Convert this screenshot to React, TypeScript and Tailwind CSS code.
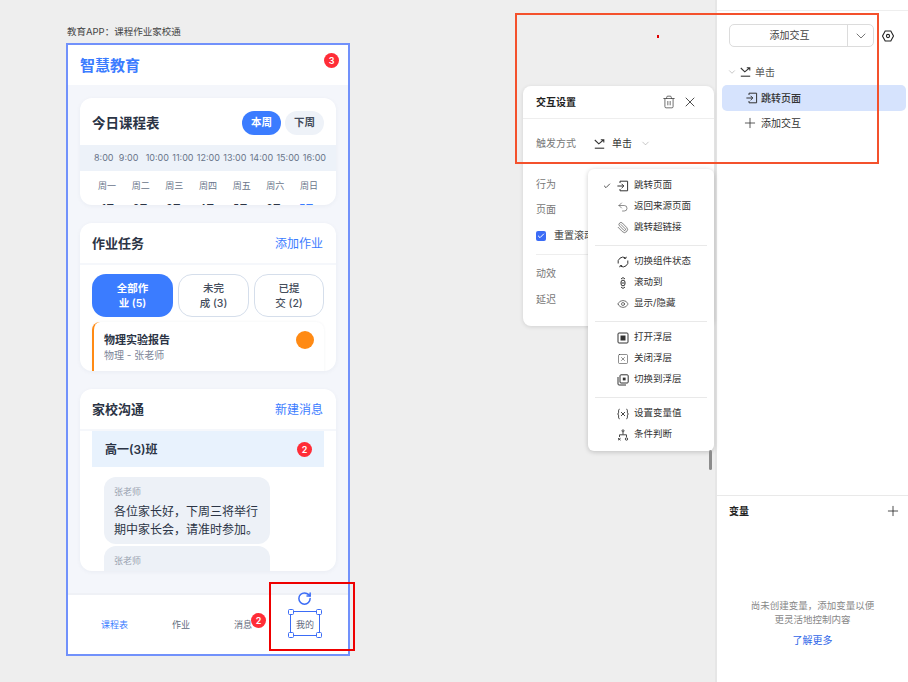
import { Check, ChevronDown, Eye, Paperclip, Plus, RotateCw, SquareX, Trash2, Undo2, X } from "lucide-react";
import type { ReactNode } from "react";

const font = "font-['Inter','Noto_Sans_CJK_SC',sans-serif]";

function TriggerIcon() {
  return (
    <svg width="11" height="10" viewBox="0 0 11 10" fill="none" stroke="#333" strokeWidth="1.1">
      <path d="M.8 9.2h9.4" />
      <path d="M.8 1l4 3.8 4.6-3.8M6.8.8h3v2.8" />
    </svg>
  );
}

function JumpIcon() {
  return (
    <svg width="12" height="12" viewBox="0 0 12 12" fill="none" stroke="#333" strokeWidth="1">
      <path d="M3 3V1.2h7.6v9.6H3V9" />
      <path d="M.4 6h6.4M4.6 3.8 6.8 6 4.6 8.2" />
    </svg>
  );
}

function SwitchIcon() {
  return (
    <svg width="12" height="12" viewBox="0 0 12 12" fill="none" stroke="#333" strokeWidth="1">
      <path d="M1.2 7.5A5 5 0 0 1 8.500 1.800M10.800 4.500a5 5 0 0 1-7.300 5.700" />
      <path d="M9.300.8 8.700 2.500 6.900 2.300M2.700 11.200l.6-1.700 1.800.2" />
    </svg>
  );
}

function ScrollIcon() {
  return (
    <svg width="12" height="12" viewBox="0 0 12 12" fill="none" stroke="#333" strokeWidth="1">
      <rect x="4" y="3.200" width="4" height="5.600" rx="2" />
      <path d="M4 2 6 .6 8 2M4 10l2 1.400L8 10M4.400 6h3.200" />
    </svg>
  );
}

function OpenLayerIcon() {
  return (
    <svg width="12" height="12" viewBox="0 0 12 12" fill="none" stroke="#333">
      <rect x="1" y="1" width="10" height="10" rx="1" />
      <rect x="3.500" y="3.500" width="5" height="5" fill="#333" stroke="none" />
    </svg>
  );
}

function SwapLayerIcon() {
  return (
    <svg width="12" height="12" viewBox="0 0 12 12" fill="none" stroke="#333">
      <rect x="3" y=".8" width="8.200" height="8.200" rx="1" />
      <rect x="5.800" y="3.600" width="2.800" height="2.800" fill="#333" stroke="none" />
      <path d="M1 3v7a1 1 0 0 0 1 1h7" />
    </svg>
  );
}

function VariableIcon() {
  return (
    <svg width="12" height="12" viewBox="0 0 12 12" fill="none" stroke="#333" strokeWidth=".9">
      <path d="M2.600 1.200C1.400 1.200 1.600 2.400 1.600 4c0 1.300-.3 2-1 2 .7 0 1 .7 1 2 0 1.600-.2 2.800 1 2.800" />
      <path d="M9.400 1.200c1.200 0 1 1.200 1 2.800 0 1.300.3 2 1 2-.7 0-1 .7-1 2 0 1.600.2 2.800-1 2.800" />
      <path d="M4 4l4 4M8 4 4 8" />
    </svg>
  );
}

function BranchIcon() {
  return (
    <svg width="12" height="12" viewBox="0 0 12 12" fill="none" stroke="#333" strokeWidth=".9">
      <circle cx="6" cy="1.800" r="1" />
      <path d="M6 3v2.500M2.500 8V5.800h7V8" />
      <path d="M1 9.200l2.600 2M3.600 9.200 1 11.200" />
      <circle cx="9.500" cy="10" r="1.200" />
    </svg>
  );
}

function HexIcon() {
  return (
    <svg width="12" height="12" viewBox="0 0 12 12" fill="none" stroke="#222" strokeWidth="1.1">
      <path d="M3.200 1h5.600L11.500 6 8.800 11H3.200L.5 6z" />
      <circle cx="6" cy="6" r="1.600" />
    </svg>
  );
}

function Badge({ n, className }: { n: number; className: string }) {
  return (
    <span className={`absolute flex h-[15px] w-[15px] items-center justify-center rounded-full bg-[#ff2d37] text-[9px] font-semibold text-white ${className}`}>
      {n}
    </span>
  );
}

function Card({ className, children }: { className: string; children: ReactNode }) {
  return <section className={`overflow-hidden rounded-xl bg-white shadow-[0_1px_4px_rgba(30,50,90,0.05)] ${className}`}>{children}</section>;
}

function CardHead({ title, action }: { title: string; action: string }) {
  return (
    <div className="flex h-[42px] items-center justify-between border-b-2 border-[#f5f7fb] pt-[2px] pr-[13px] pl-3">
      <h2 className="text-[13px] font-semibold text-[#2b3445]">{title}</h2>
      <span className="text-xs text-[#3b7cff]">{action}</span>
    </div>
  );
}

function Phone() {
  const days = ["周一", "周二", "周三", "周四", "周五", "周六", "周日"];
  return (
    <div className="absolute top-[43px] left-[66px] flex h-[613px] w-[284px] flex-col border-2 border-[#7191fb] bg-[#f4f6fb]">
      <header className="relative flex h-[40px] shrink-0 items-center bg-white px-[12px] pt-[2px]">
        <h1 className="text-[15px] font-bold text-[#3b7cff]">智慧教育</h1>
        <Badge n={3} className="top-[8px] right-[9px]" />
      </header>
      <div className="flex flex-1 flex-col gap-[18px] px-[12px] pt-[13px]">
        <Card className="h-[107px]">
          <div className="flex h-[47px] items-center justify-between px-3 pt-[2px]">
            <h2 className="pt-[2px] text-[13.5px] font-semibold text-[#2b3445]">今日课程表</h2>
            <div className="flex gap-[4px] text-[10.5px] font-semibold">
              <span className="flex h-[24px] w-[39px] items-center justify-center rounded-full bg-[#3b7cff] text-white">本周</span>
              <span className="flex h-[24px] w-[39px] items-center justify-center rounded-full bg-[#eef2f8] text-[#444d5c]">下周</span>
            </div>
          </div>
          <div className="flex h-[26px] items-center gap-[3.3px] bg-[#edf2f9] pl-[14px] text-[9px] text-[#69758a]">
            <span className="mr-[2px]">8:00</span>
            <span className="mr-[4px]">9:00</span>
            <span>10:00</span>
            <span>11:00</span>
            <span>12:00</span>
            <span>13:00</span>
            <span>14:00</span>
            <span>15:00</span>
            <span>16:00</span>
          </div>
          <div className="flex justify-between px-[18px] pt-[8px] text-[9px] text-[#69758a]">
            {days.map((d) => (
              <span key={d}>{d}</span>
            ))}
          </div>
          <div className="flex justify-between px-[22px] pt-[8px] text-[9px] font-semibold text-[#2b3445]">
            {["1", "2", "3", "4", "5", "6"].map((d) => (
              <span key={d}>{d}日</span>
            ))}
            <span className="text-[#3b7cff]">7日</span>
          </div>
        </Card>
        <Card className="h-[148px]">
          <CardHead title="作业任务" action="添加作业" />
          <div className="flex gap-[5px] px-3 pt-[9px] text-[10.5px] leading-[15px] font-medium text-[#444d5c]">
            <span className="flex h-[43px] w-[81px] items-center justify-center rounded-[14px] bg-[#3b7cff] px-5 text-center font-semibold text-white">全部作业 (5)</span>
            <span className="flex h-[43px] w-[71px] items-center justify-center rounded-[14px] border border-[#d5deeb] px-[19px] text-center">未完成 (3)</span>
            <span className="flex h-[43px] w-[70px] items-center justify-center rounded-[14px] border border-[#d5deeb] px-[19px] text-center">已提交 (2)</span>
          </div>
          <div className="mx-3 mt-[5px] flex h-[60px] items-start justify-between rounded-lg border-l-2 border-[#ff8a14] pt-[9px] pr-[10px] pl-[10px] shadow-[0_0_3px_rgba(30,50,90,0.06)]">
            <div className="pt-[2px]">
              <p className="text-[11px] leading-[15px] font-semibold text-[#2b3445]">物理实验报告</p>
              <p className="text-[10px] leading-[15px] text-[#7b8698]">物理 - 张老师</p>
            </div>
            <span className="h-[18px] w-[18px] rounded-full bg-[#ff8a14]" />
          </div>
        </Card>
        <Card className="h-[182px]">
          <CardHead title="家校沟通" action="新建消息" />
          <div className="mx-3 h-[200px] bg-white">
            <div className="relative flex h-[36px] items-center bg-[#e8f2fd] px-[13px] pt-[2px] text-xs font-semibold text-[#2b3445]">
              高一(3)班
              <Badge n={2} className="top-[11px] right-[12px]" />
            </div>
            <div className="ml-3 flex w-[166px] flex-col gap-[2px] pt-[10px]">
              <div className="h-[67px] rounded-xl bg-[#edf1f7] px-[10px] pt-[8px]">
                <p className="text-[9px] leading-[13px] text-[#9aa3b1]">张老师</p>
                <p className="mt-[5px] text-xs leading-[18px] text-[#2b3445]">各位家长好，下周三将举行期中家长会，请准时参加。</p>
              </div>
              <div className="h-[60px] rounded-xl bg-[#edf1f7] px-[10px] pt-[8px]">
                <p className="text-[9px] leading-[13px] text-[#9aa3b1]">张老师</p>
              </div>
            </div>
          </div>
        </Card>
      </div>
      <nav className="relative flex h-[61px] shrink-0 items-center border-t-2 border-[#eff1f6] bg-white text-[9px] text-[#5f6a7c]">
        <span className="w-[96px] pl-[33px] text-[#3b7cff]">课程表</span>
        <span className="w-[60px] pl-[8px]">作业</span>
        <span className="relative w-[60px] pl-[10px]">
          消息
          <Badge n={2} className="-top-[5px] left-[27px]" />
        </span>
        <span className="pl-[12px]">我的</span>
        <div className="absolute top-[16px] left-[222px] h-[25px] w-[30px] border border-[#3b6cf6]">
          {["-top-[3px] -left-[3px]", "-top-[3px] -right-[3px]", "-bottom-[3px] -left-[3px]", "-bottom-[3px] -right-[3px]"].map((p) => (
            <i key={p} className={`absolute h-[6px] w-[6px] rounded-[1.5px] border border-[#3b6cf6] bg-white ${p}`} />
          ))}
        </div>
        <RotateCw className="absolute -top-[4px] left-[229px] text-[#3b6cf6]" size={15} strokeWidth={2.4} />
      </nav>
    </div>
  );
}

function SettingsPanel() {
  return (
    <div className="absolute top-[86px] left-[523px] h-[240px] w-[191px] rounded-lg bg-white text-[10px] text-[#777] shadow-[0_1px_4px_rgba(0,0,0,0.12)]">
      <div className="flex h-[33px] items-center justify-between border-b border-[#eeeeee] pr-[16px] pl-[13px]">
        <h3 className="font-semibold text-[#222]">交互设置</h3>
        <div className="flex items-center gap-[6px] text-[#333]">
          <Trash2 size={14} strokeWidth={1.2} />
          <X size={16} strokeWidth={1.3} />
        </div>
      </div>
      <div className="flex h-[49px] items-center pl-[13px]">
        <span className="w-[58px]">触发方式</span>
        <TriggerIcon />
        <span className="ml-[7px] text-[#333]">单击</span>
        <ChevronDown className="ml-[8px] text-[#999]" size={11} strokeWidth={1.2} />
      </div>
      <div className="flex flex-col pl-[13px]">
        <span className="mt-[9px] leading-[15px]">行为</span>
        <span className="mt-[10px] leading-[15px]">页面</span>
        <label className="mt-[11px] flex items-center gap-[8px] leading-[15px] text-[#444]">
          <span className="flex h-[10px] w-[10px] items-center justify-center rounded-[2px] bg-[#3b6cf6]">
            <Check className="text-white" size={8} strokeWidth={3} />
          </span>
          重置滚动
        </label>
        <hr className="mt-[11px] mr-[13px] border-[#eeeeee]" />
        <span className="mt-[11px] leading-[15px]">动效</span>
        <span className="mt-[11px] leading-[15px]">延迟</span>
      </div>
    </div>
  );
}

const menuGroups: { label: string; icon: ReactNode; checked?: boolean }[][] = [
  [
    { label: "跳转页面", icon: <JumpIcon />, checked: true },
    { label: "返回来源页面", icon: <Undo2 size={14} strokeWidth={1.1} /> },
    { label: "跳转超链接", icon: <Paperclip className="-scale-x-100" size={13} strokeWidth={1.2} /> },
  ],
  [
    { label: "切换组件状态", icon: <SwitchIcon /> },
    { label: "滚动到", icon: <ScrollIcon /> },
    { label: "显示/隐藏", icon: <Eye size={12} strokeWidth={1.3} /> },
  ],
  [
    { label: "打开浮层", icon: <OpenLayerIcon /> },
    { label: "关闭浮层", icon: <SquareX size={14} strokeWidth={1.1} /> },
    { label: "切换到浮层", icon: <SwapLayerIcon /> },
  ],
  [
    { label: "设置变量值", icon: <VariableIcon /> },
    { label: "条件判断", icon: <BranchIcon /> },
  ],
];

function ActionMenu() {
  return (
    <div className="absolute top-[169px] left-[588px] h-[282px] w-[126px] rounded-md bg-white pt-[6px] text-[9.5px] text-[#333] shadow-[0_1px_5px_rgba(0,0,0,0.2)]">
      {menuGroups.map((group, i) => (
        <div key={group[0].label} className={i > 0 ? "mx-[7px] mt-[7px] border-t border-[#e9e9e9] pt-[5px]" : "mx-[7px]"}>
          {group.map((item) => (
            <div key={item.label} className="flex h-[21px] items-center">
              <span className="flex w-[16px] justify-end">{item.checked && <Check size={8} strokeWidth={2.5} />}</span>
              <span className="ml-[6px] flex w-[12px] justify-center text-[#333]">{item.icon}</span>
              <span className="ml-[5px]">{item.label}</span>
            </div>
          ))}
        </div>
      ))}
    </div>
  );
}

function RightPanel() {
  return (
    <aside className="flex h-full w-[193px] shrink-0 flex-col border-l-2 border-[#e6e6e6] bg-white text-[10px] text-[#444]">
      <div className="h-[11px] border-b border-[#eeeeee]" />
      <div className="flex items-center gap-[8px] pt-[13px] pr-[13px] pl-[12px]">
        <div className="flex h-[23px] w-[145px] rounded-[5px] border border-[#dcdcdc]">
          <span className="flex flex-1 items-center justify-center pl-[2px]">添加交互</span>
          <span className="flex w-[26px] items-center justify-center border-l border-[#dcdcdc]">
            <ChevronDown size={16} strokeWidth={1.1} />
          </span>
        </div>
        <HexIcon />
      </div>
      <div className="h-[449px] border-b border-[#e9e9e9] pt-[13px]">
        <div className="flex h-[24px] items-center pl-[10px] text-[#555]">
          <ChevronDown className="text-[#999]" size={10} strokeWidth={1.3} />
          <span className="mr-[4px] ml-[3px] flex"><TriggerIcon /></span>
          单击
        </div>
        <div className="mx-[5px] mt-[1px] flex h-[26px] w-[184px] items-center rounded-[5px] bg-[#d6e3fd] pl-[24px] font-medium text-[#333]">
          <JumpIcon />
          <span className="ml-[3px]">跳转页面</span>
        </div>
        <div className="flex h-[24px] items-center pl-[25px] text-[#333]">
          <Plus size={16} strokeWidth={1.2} />
          <span className="ml-[3px]">添加交互</span>
        </div>
      </div>
      <div className="flex items-center justify-between pt-[7px] pr-[7px] pl-[12px]">
        <span className="font-semibold text-[#222]">变量</span>
        <Plus className="text-[#222]" size={16} strokeWidth={1.2} />
      </div>
      <p className="mt-[80px] px-[30px] text-center text-[9.5px] leading-[14px] text-[#888]">尚未创建变量，添加变量以便更灵活地控制内容</p>
      <span className="mt-[6px] text-center text-[#2f66e8]">了解更多</span>
    </aside>
  );
}

export default function App() {
  return (
    <div className={`flex h-[682px] w-[908px] overflow-hidden bg-[#eeeeee] ${font}`}>
      <main className="relative flex-1">
        <p className="absolute top-[25px] left-[67px] text-[9.5px] leading-[14px] text-[#444]">教育APP：课程作业家校通</p>
        <Phone />
        <SettingsPanel />
        <ActionMenu />
        <i className="absolute top-[450px] left-[709px] h-[20px] w-[3px] rounded-full bg-[#8c8c8c]" />
        <i className="absolute top-[35px] left-[657px] h-[3px] w-[2px] bg-[#e00000]" />
      </main>
      <RightPanel />
      <div className="pointer-events-none absolute top-[13px] left-[515px] h-[151px] w-[364px] border-2 border-[#f4512c]" />
      <div className="pointer-events-none absolute top-[582px] left-[269px] h-[69px] w-[86px] border-2 border-[#ee0000]" />
    </div>
  );
}
